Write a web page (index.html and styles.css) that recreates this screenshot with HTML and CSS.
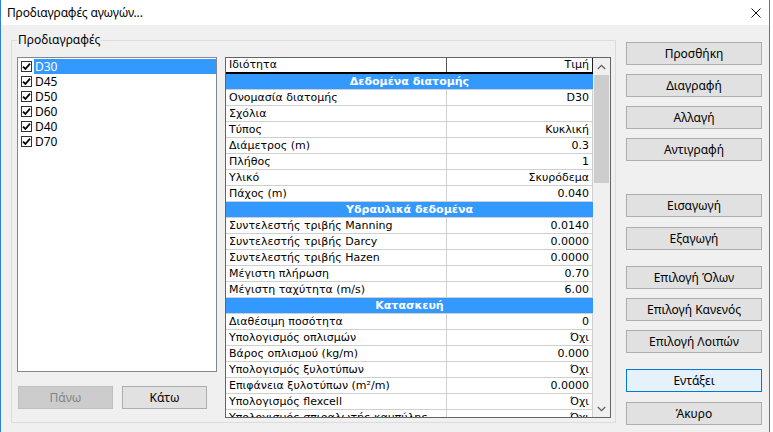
FILE: index.html
```html
<!DOCTYPE html>
<html lang="el">
<head>
<meta charset="utf-8">
<title>Προδιαγραφές αγωγών...</title>
<link rel="stylesheet" href="styles.css">
</head>
<body>
<div class="window">
  <div class="titlebar">
    <span class="title">Προδιαγραφές αγωγών...</span>
    <svg class="close" width="10" height="10" viewBox="0 0 10 10"><path d="M0.5 0.5 L9.5 9.5 M9.5 0.5 L0.5 9.5" stroke="#111" stroke-width="1" fill="none"/></svg>
  </div>
  <div class="content">
    <fieldset class="group">
      <legend>Προδιαγραφές</legend>
      <div class="group-inner">
        <div class="left">
          <div class="list">
            <div class="item"><span class="chk"><svg width="9" height="9" viewBox="0 0 9 9"><path d="M1 4.6 L3.4 7 L8 1.6" stroke="#000" stroke-width="1.8" fill="none"/></svg></span><span class="lbl sel">D30</span></div>
            <div class="item"><span class="chk"><svg width="9" height="9" viewBox="0 0 9 9"><path d="M1 4.6 L3.4 7 L8 1.6" stroke="#000" stroke-width="1.8" fill="none"/></svg></span><span class="lbl">D45</span></div>
            <div class="item"><span class="chk"><svg width="9" height="9" viewBox="0 0 9 9"><path d="M1 4.6 L3.4 7 L8 1.6" stroke="#000" stroke-width="1.8" fill="none"/></svg></span><span class="lbl">D50</span></div>
            <div class="item"><span class="chk"><svg width="9" height="9" viewBox="0 0 9 9"><path d="M1 4.6 L3.4 7 L8 1.6" stroke="#000" stroke-width="1.8" fill="none"/></svg></span><span class="lbl">D60</span></div>
            <div class="item"><span class="chk"><svg width="9" height="9" viewBox="0 0 9 9"><path d="M1 4.6 L3.4 7 L8 1.6" stroke="#000" stroke-width="1.8" fill="none"/></svg></span><span class="lbl">D40</span></div>
            <div class="item"><span class="chk"><svg width="9" height="9" viewBox="0 0 9 9"><path d="M1 4.6 L3.4 7 L8 1.6" stroke="#000" stroke-width="1.8" fill="none"/></svg></span><span class="lbl">D70</span></div>
          </div>
          <div class="move-btns">
            <button class="btn btn-up" disabled>Πάνω</button>
            <button class="btn btn-down">Κάτω</button>
          </div>
        </div>
        <div class="grid">
          <div class="grid-main">
            <div class="grid-head"><span class="k">Ιδιότητα</span><span class="v">Τιμή</span></div>
            <div class="grid-rows">
              <div class="sec">Δεδομένα διατομής</div>
              <div class="row"><span class="k">Ονομασία διατομής</span><span class="v">D30</span></div>
              <div class="row"><span class="k">Σχόλια</span><span class="v"></span></div>
              <div class="row"><span class="k">Τύπος</span><span class="v">Κυκλική</span></div>
              <div class="row"><span class="k">Διάμετρος (m)</span><span class="v">0.3</span></div>
              <div class="row"><span class="k">Πλήθος</span><span class="v">1</span></div>
              <div class="row"><span class="k">Υλικό</span><span class="v">Σκυρόδεμα</span></div>
              <div class="row"><span class="k">Πάχος (m)</span><span class="v">0.040</span></div>
              <div class="sec">Υδραυλικά δεδομένα</div>
              <div class="row"><span class="k">Συντελεστής τριβής Manning</span><span class="v">0.0140</span></div>
              <div class="row"><span class="k">Συντελεστής τριβής Darcy</span><span class="v">0.0000</span></div>
              <div class="row"><span class="k">Συντελεστής τριβής Hazen</span><span class="v">0.0000</span></div>
              <div class="row"><span class="k">Μέγιστη πλήρωση</span><span class="v">0.70</span></div>
              <div class="row"><span class="k">Μέγιστη ταχύτητα (m/s)</span><span class="v">6.00</span></div>
              <div class="sec">Κατασκευή</div>
              <div class="row"><span class="k">Διαθέσιμη ποσότητα</span><span class="v">0</span></div>
              <div class="row"><span class="k">Υπολογισμός οπλισμών</span><span class="v">Όχι</span></div>
              <div class="row"><span class="k">Βάρος οπλισμού (kg/m)</span><span class="v">0.000</span></div>
              <div class="row"><span class="k">Υπολογισμός ξυλοτύπων</span><span class="v">Όχι</span></div>
              <div class="row"><span class="k">Επιφάνεια ξυλοτύπων (m²/m)</span><span class="v">0.0000</span></div>
              <div class="row"><span class="k">Υπολογισμός flexcell</span><span class="v">Όχι</span></div>
              <div class="row"><span class="k">Υπολογισμός σπιραλωτής καμπύλης</span><span class="v">Όχι</span></div>
            </div>
          </div>
          <div class="scrollbar">
            <div class="sb-arrow"><svg width="9" height="6" viewBox="0 0 9 6"><path d="M0.8 5 L4.5 1.3 L8.2 5" stroke="#606060" stroke-width="1.3" fill="none"/></svg></div>
            <div class="sb-track"><div class="sb-thumb"></div></div>
            <div class="sb-arrow"><svg width="9" height="6" viewBox="0 0 9 6"><path d="M0.8 1 L4.5 4.7 L8.2 1" stroke="#606060" stroke-width="1.3" fill="none"/></svg></div>
          </div>
        </div>
      </div>
    </fieldset>
    <div class="buttons">
      <button class="btn">Προσθήκη</button>
      <button class="btn">Διαγραφή</button>
      <button class="btn">Αλλαγή</button>
      <button class="btn">Αντιγραφή</button>
      <button class="btn gap-xl">Εισαγωγή</button>
      <button class="btn gap-s">Εξαγωγή</button>
      <button class="btn gap-l">Επιλογή Όλων</button>
      <button class="btn">Επιλογή Κανενός</button>
      <button class="btn">Επιλογή Λοιπών</button>
      <button class="btn btn-default gap-l">Εντάξει</button>
      <button class="btn gap-s">Άκυρο</button>
    </div>
  </div>
</div>
</body>
</html>
```

FILE: styles.css
```css
* { box-sizing: border-box; }
html, body { margin: 0; padding: 0; background: #ffffff; }
body {
  width: 773px;
  height: 432px;
  overflow: hidden;
  font-family: "Noto Sans", "Open Sans", sans-serif;
  font-size: 12px;
  color: #000;
}
.window {
  width: 770px;
  height: 432px;
  border-left: 1px solid #2f7fd4;
  border-right: 1px solid #2f7fd4;
  background: #f0f0f0;
  display: flex;
  flex-direction: column;
}
.titlebar {
  height: 25px;
  flex: none;
  background: #ffffff;
  display: flex;
  align-items: center;
  padding-left: 6px;
}
.title { font-size: 12px; line-height: 16px; letter-spacing: -0.15px; }
.close { margin-left: auto; margin-right: 8px; }

.content {
  display: flex;
  align-items: flex-start;
  padding-left: 10px;
}
.group {
  margin: 7px 0 0 0;
  width: 605px;
  border: 1px solid #dcdcdc;
  padding: 9px 4px 4px 5px;
  min-width: 0;
}
.group legend {
  padding: 0 1px;
  font-size: 12px;
  line-height: 16px;
}
.group-inner {
  display: flex;
  gap: 8px;
  height: 361px;
}
.left {
  width: 200px;
  display: flex;
  flex-direction: column;
}
.list {
  flex: 1;
  background: #fff;
  border: 1px solid #828790;
  padding: 1px 0 0 3px;
}
.item {
  height: 15px;
  display: flex;
  align-items: center;
}
.chk {
  width: 11px;
  height: 11px;
  border: 1px solid #333;
  background: #fff;
  display: flex;
  align-items: center;
  justify-content: center;
  margin-right: 2px;
}
.chk svg { display: block; }
.lbl {
  flex: 1;
  height: 15px;
  line-height: 15px;
  padding-left: 1px;
  font-size: 12px;
}
.lbl.sel { background: #3399ff; color: #fff; }

.move-btns {
  display: flex;
  gap: 9px;
  margin: 14px 0 9px 1px;
}
.btn {
  height: 23px;
  border: 1px solid #adadad;
  background: #e1e1e1;
  font-family: "Noto Sans", "Open Sans", sans-serif;
  font-size: 12px;
  color: #000;
  padding: 0;
  line-height: 20px;
}
.btn-up {
  width: 95px;
  background: #cccccc;
  border-color: #bfbfbf;
  color: #838383;
}
.btn-down { width: 85px; }

.grid {
  width: 386px;
  height: 361px;
  border: 1px solid #646464;
  background: #fff;
  display: flex;
}
.grid-main {
  width: 367px;
  display: flex;
  flex-direction: column;
  overflow: hidden;
  font-family: "DejaVu Sans", "Verdana", sans-serif;
  font-size: 11px;
}
.grid-head {
  height: 16px;
  flex: none;
  display: grid;
  grid-template-columns: 221px 146px;
  border-bottom: 2px solid #000;
  line-height: 14px;
}
.grid-head .k { border-right: 1px solid #555; padding-left: 3px; }
.grid-head .v { border-right: 1px solid #222; padding-right: 3px; text-align: right; }
.grid-rows { flex: 1; overflow: hidden; }
.row {
  height: 16px;
  display: grid;
  grid-template-columns: 221px 146px;
  border-bottom: 1px solid #cfcfcf;
  line-height: 15px;
  white-space: nowrap;
}
.row .k { border-right: 1px solid #cfcfcf; padding-left: 3px; overflow: hidden; }
.row .v { border-right: 1px solid #cfcfcf; padding-right: 3px; text-align: right; }
.sec {
  height: 16px;
  background: #3399ff;
  color: #fff;
  font-weight: bold;
  text-align: center;
  line-height: 15px;
  border-bottom: 1px solid #cfcfcf;
}
.scrollbar {
  width: 17px;
  background: #f0f0f0;
  display: flex;
  flex-direction: column;
}
.sb-arrow {
  height: 17px;
  flex: none;
  display: flex;
  align-items: center;
  justify-content: center;
}
.sb-track { flex: 1; padding: 0 1px; }
.sb-thumb { height: 108px; background: #cdcdcd; }

.buttons {
  width: 136px;
  margin: 17px 0 0 10px;
  display: flex;
  flex-direction: column;
  gap: 9px;
}
.buttons .btn { width: 136px; }
.gap-xl { margin-top: 24px; }
.gap-s { margin-top: 1px; }
.gap-l { margin-top: 7px; }
.btn-default { background: #e5f1fb; border-color: #0078d7; }
```
